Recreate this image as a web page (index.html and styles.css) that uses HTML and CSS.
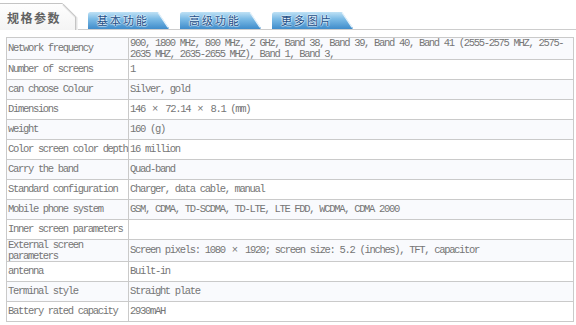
FILE: index.html
```html
<!DOCTYPE html>
<html>
<head>
<meta charset="utf-8">
<link rel="stylesheet" href="styles.css">
</head>
<body>
<div class="tabs">
  <div class="tab-active">
    <svg class="tab-bg" width="78" height="30" viewBox="0 0 78 30">
      <defs>
        <linearGradient id="ga" x1="0" y1="0" x2="0" y2="1">
          <stop offset="0" stop-color="#fefefe"/>
          <stop offset="1" stop-color="#f4f4f4"/>
        </linearGradient>
      </defs>
      <path d="M0 3 H62 L75 16 V30 H0 Z" fill="url(#ga)"/>
      <path d="M63 4.5 L76.5 18 V30" fill="none" stroke="#e3e3e3" stroke-width="2"/>
      <path d="M0 3.5 H62.3 L75.5 16.7 V30" fill="none" stroke="#c4c4c4"/>
    </svg>
    <span class="tab-label">规格参数</span>
  </div>
  <div class="tab-rest">
    <div class="tab-blue">
      <svg class="tab-bg" width="81" height="17" viewBox="0 0 81 17">
        <defs>
          <linearGradient id="gb1" x1="0" y1="0" x2="0" y2="1">
            <stop offset="0" stop-color="#bfe1f5"/>
            <stop offset="0.4" stop-color="#7dbce6"/>
            <stop offset="1" stop-color="#3f8ccb"/>
          </linearGradient>
        </defs>
        <path d="M0 17 V2.5 Q0 0 2.5 0 H70 L80.5 15.5 V17 Z" fill="url(#gb1)"/>
        <path d="M70 0.5 L80 15.3" fill="none" stroke="#e6f2fa" stroke-width="1.2"/>
      </svg>
      <span class="tab-text">基本功能</span>
    </div>
    <div class="tab-blue">
      <svg class="tab-bg" width="81" height="17" viewBox="0 0 81 17">
        <defs>
          <linearGradient id="gb2" x1="0" y1="0" x2="0" y2="1">
            <stop offset="0" stop-color="#bfe1f5"/>
            <stop offset="0.4" stop-color="#7dbce6"/>
            <stop offset="1" stop-color="#3f8ccb"/>
          </linearGradient>
        </defs>
        <path d="M0 17 V2.5 Q0 0 2.5 0 H70 L80.5 15.5 V17 Z" fill="url(#gb2)"/>
        <path d="M70 0.5 L80 15.3" fill="none" stroke="#e6f2fa" stroke-width="1.2"/>
      </svg>
      <span class="tab-text">高级功能</span>
    </div>
    <div class="tab-blue">
      <svg class="tab-bg" width="81" height="17" viewBox="0 0 81 17">
        <defs>
          <linearGradient id="gb3" x1="0" y1="0" x2="0" y2="1">
            <stop offset="0" stop-color="#bfe1f5"/>
            <stop offset="0.4" stop-color="#7dbce6"/>
            <stop offset="1" stop-color="#3f8ccb"/>
          </linearGradient>
        </defs>
        <path d="M0 17 V2.5 Q0 0 2.5 0 H70 L80.5 15.5 V17 Z" fill="url(#gb3)"/>
        <path d="M70 0.5 L80 15.3" fill="none" stroke="#e6f2fa" stroke-width="1.2"/>
      </svg>
      <span class="tab-text">更多图片</span>
    </div>
  </div>
</div>

<table class="spec">
  <tr class="odd"><td class="k">Network frequency</td><td class="v">900, 1800 MHz, 800 MHz, 2 GHz, Band 38, Band 39, Band 40, Band 41 (2555-2575 MHZ, 2575-2635 MHZ, 2635-2655 MHZ), Band 1, Band 3,</td></tr>
  <tr><td class="k">Number of screens</td><td class="v">1</td></tr>
  <tr class="odd"><td class="k">can choose Colour</td><td class="v">Silver, gold</td></tr>
  <tr><td class="k">Dimensions</td><td class="v">146 <span class="fw">×</span> 72.14 <span class="fw">×</span> 8.1 (mm)</td></tr>
  <tr class="odd"><td class="k">weight</td><td class="v">160 (g)</td></tr>
  <tr><td class="k nw">Color screen color depth</td><td class="v">16 million</td></tr>
  <tr class="odd"><td class="k">Carry the band</td><td class="v">Quad-band</td></tr>
  <tr><td class="k">Standard configuration</td><td class="v">Charger, data cable, manual</td></tr>
  <tr class="odd"><td class="k">Mobile phone system</td><td class="v">GSM, CDMA, TD-SCDMA, TD-LTE, LTE FDD, WCDMA, CDMA 2000</td></tr>
  <tr><td class="k">Inner screen parameters</td><td class="v"></td></tr>
  <tr class="odd"><td class="k">External screen parameters</td><td class="v">Screen pixels: 1080 <span class="fw">×</span> 1920; screen size: 5.2 (inches), TFT, capacitor</td></tr>
  <tr><td class="k">antenna</td><td class="v">Built-in</td></tr>
  <tr class="odd"><td class="k">Terminal style</td><td class="v">Straight plate</td></tr>
  <tr><td class="k">Battery rated capacity</td><td class="v">2930mAH</td></tr>
</table>
</body>
</html>
```

FILE: styles.css
```css
html, body {
  margin: 0;
  padding: 0;
  background: #ffffff;
}

.tabs {
  display: flex;
  align-items: flex-end;
  height: 30px;
  width: 576px;
}

.tab-active {
  display: grid;
  width: 78px;
  height: 30px;
  flex: none;
}

.tab-active > *,
.tab-blue > * {
  grid-area: 1 / 1;
}

.tab-bg {
  display: block;
}

.tab-label {
  justify-self: start;
  align-self: start;
  margin: 10px 0 0 7px;
  font-family: "Noto Sans CJK SC", sans-serif;
  font-weight: bold;
  font-size: 12px;
  line-height: 15px;
  letter-spacing: 1.5px;
  color: #626262;
}

.tab-rest {
  flex: 1;
  height: 29px;
  display: flex;
  align-items: flex-end;
  gap: 11px;
  padding-left: 10px;
  border-bottom: 1px solid #cdcdcd;
}

.tab-blue {
  display: grid;
  width: 81px;
  height: 17px;
  flex: none;
}

.tab-text {
  justify-self: start;
  align-self: center;
  margin-left: 9px;
  font-family: "Noto Sans CJK SC", sans-serif;
  font-size: 11px;
  line-height: 13px;
  letter-spacing: 2px;
  color: #1d4f88;
  text-shadow: 1px 0 1px rgba(255,255,255,0.6), -1px 0 1px rgba(255,255,255,0.6), 0 1px 1px rgba(255,255,255,0.6), 0 -1px 1px rgba(255,255,255,0.6);
}

.spec {
  margin: 7px 0 0 6px;
  width: 568px;
  border-collapse: collapse;
  table-layout: fixed;
  font-family: "Liberation Mono", "DejaVu Sans Mono", monospace;
  font-size: 10.5px;
  letter-spacing: -1.32px;
  line-height: 10.5px;
  color: #767676;
}

.spec td {
  border: 1px solid #cacaca;
  height: 19px;
  padding: 0 0 0 1px;
  vertical-align: middle;
}

.spec .k {
  width: 120px;
}

.spec .nw {
  white-space: nowrap;
}

.spec tr.odd td {
  background: #f9fafd;
}

.fw {
  letter-spacing: 0;
  padding: 0 2px;
}
```
